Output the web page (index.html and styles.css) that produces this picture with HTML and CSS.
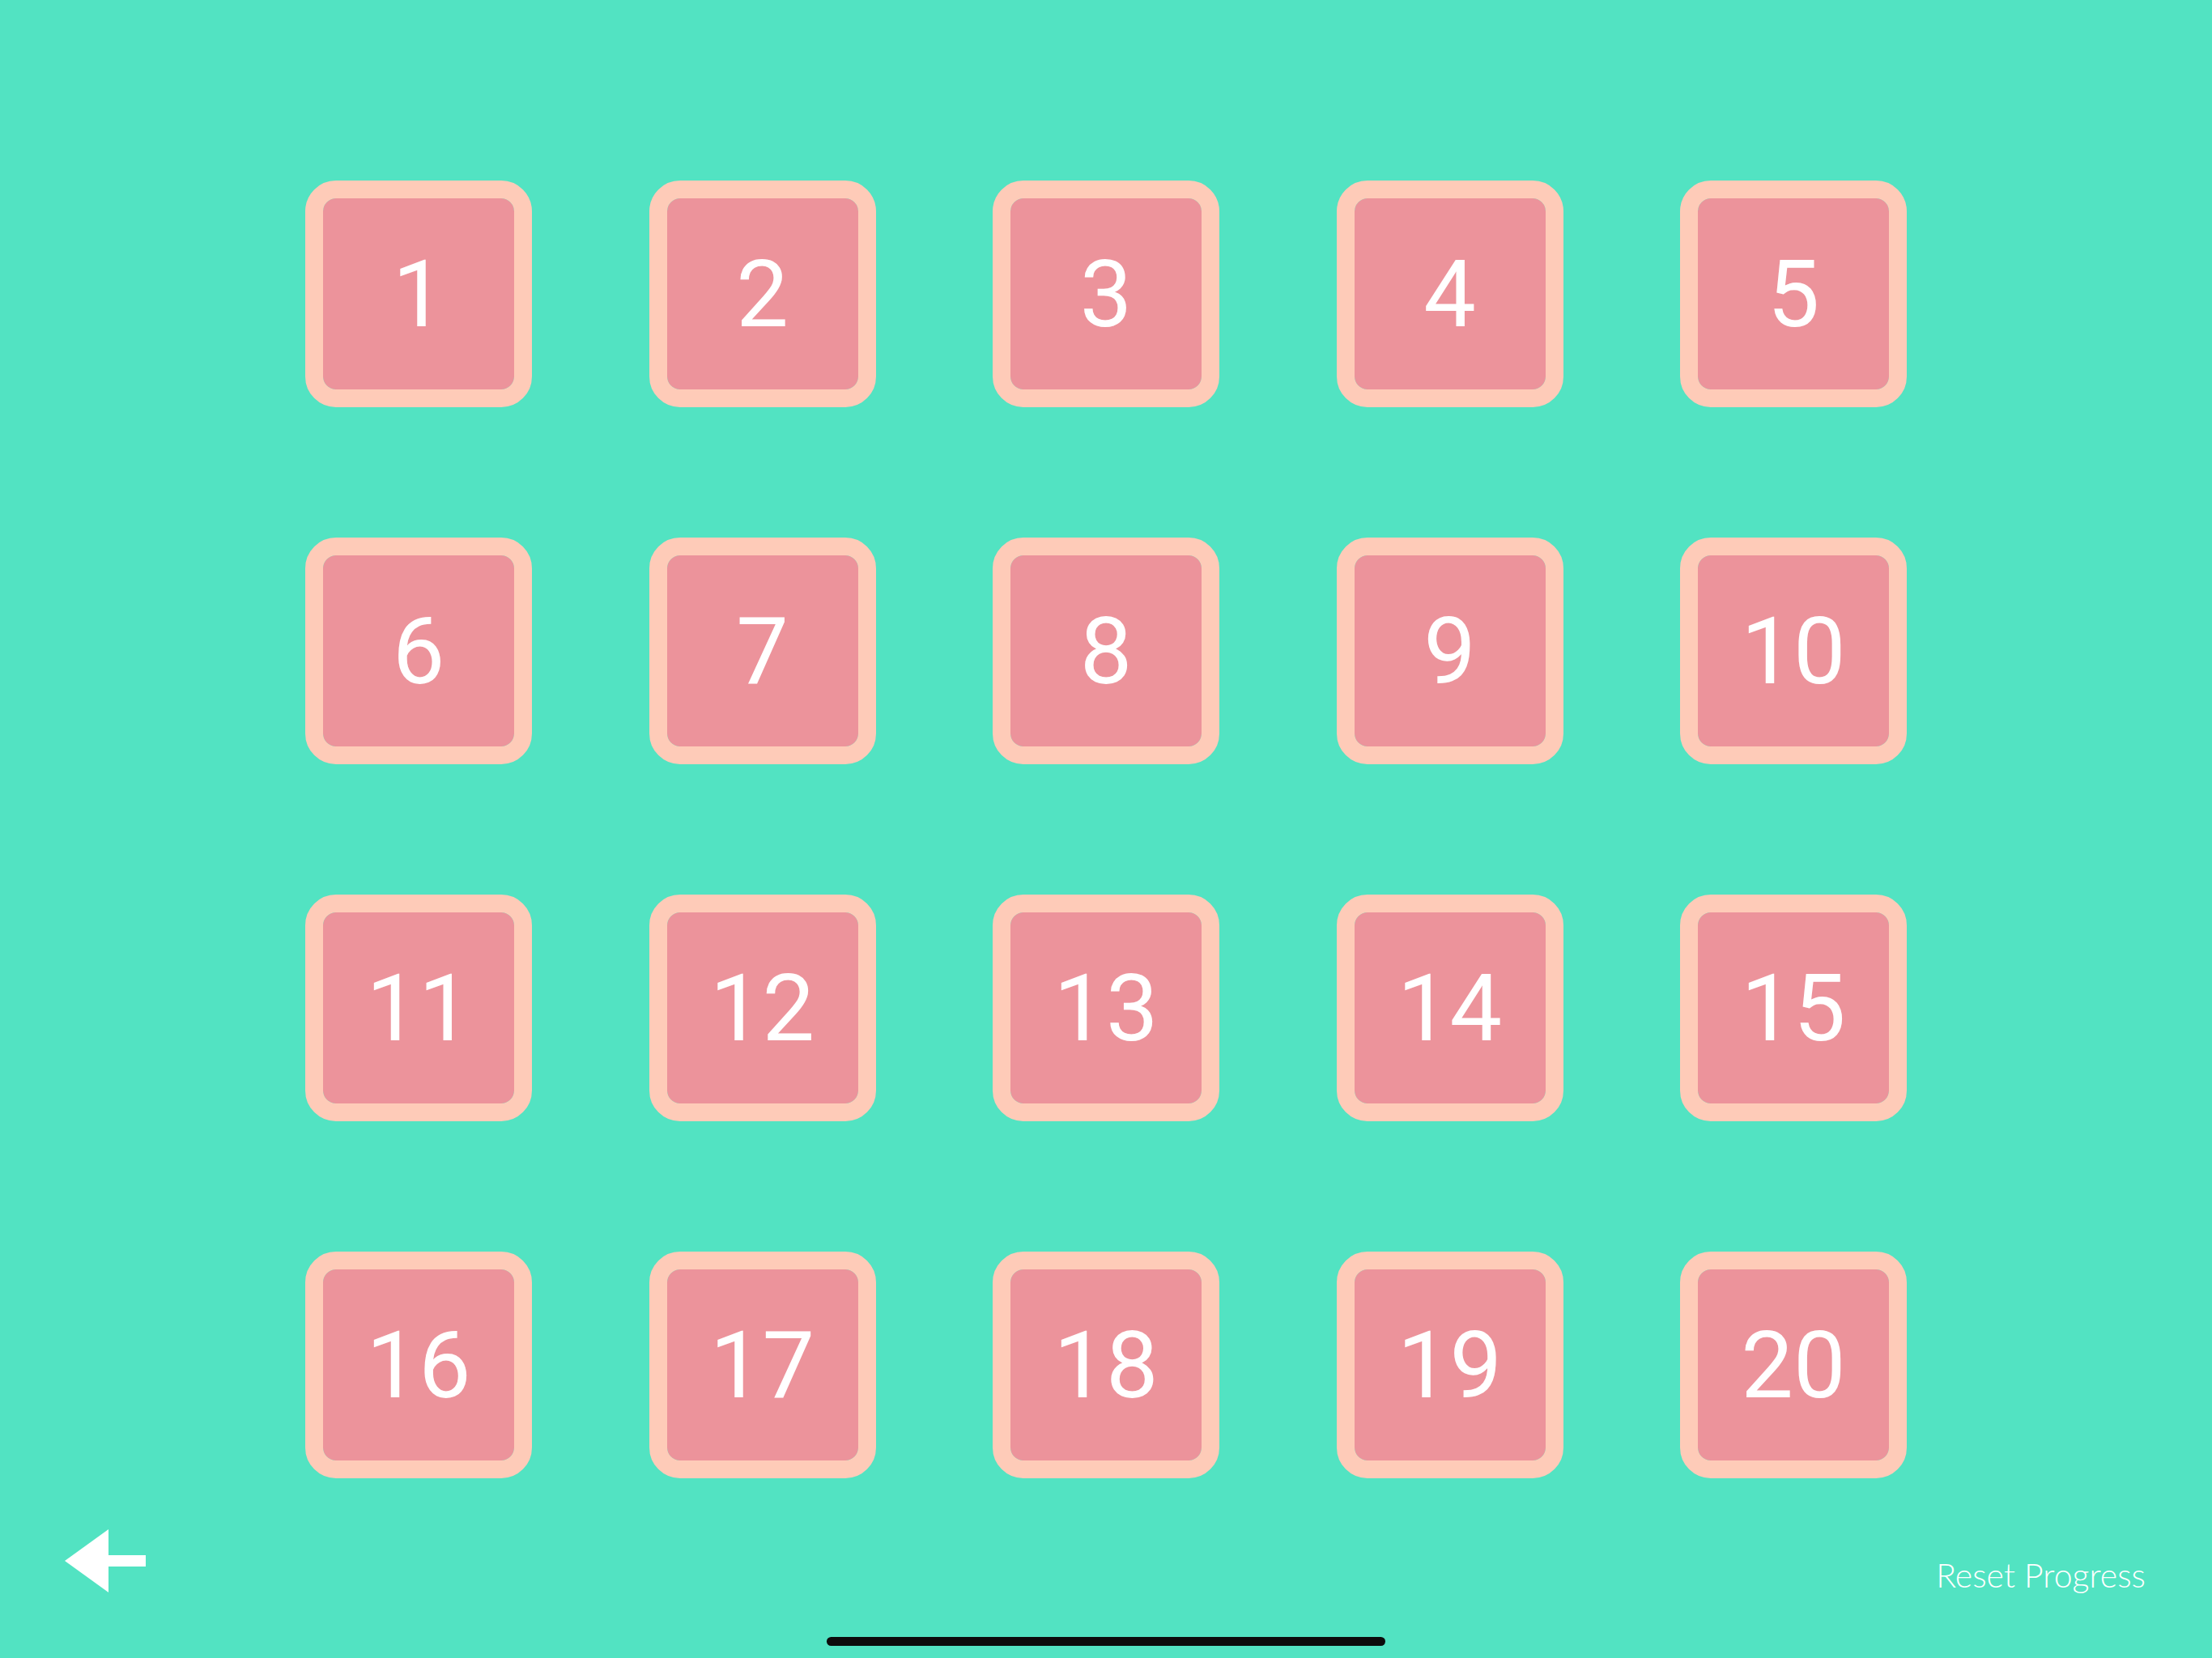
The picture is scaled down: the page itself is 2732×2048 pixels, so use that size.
FILE: index.html
```html
<!DOCTYPE html>
<html lang="en">
<head>
    <meta charset="UTF-8">
    <meta name="viewport" content="width=device-width, initial-scale=1.0">
    <title>Levels</title>
    <link rel="stylesheet" href="styles.css">
</head>
<body>

    <div class="screen">
        <div class="level-grid">
            <button class="level">1</button>
            <button class="level">2</button>
            <button class="level">3</button>
            <button class="level">4</button>
            <button class="level">5</button>
            <button class="level">6</button>
            <button class="level">7</button>
            <button class="level">8</button>
            <button class="level">9</button>
            <button class="level">10</button>
            <button class="level">11</button>
            <button class="level">12</button>
            <button class="level">13</button>
            <button class="level">14</button>
            <button class="level">15</button>
            <button class="level">16</button>
            <button class="level">17</button>
            <button class="level">18</button>
            <button class="level">19</button>
            <button class="level">20</button>
        </div>

        <div class="footer">
            <button class="back-button" aria-label="Back">
                <svg width="100" height="78" viewBox="0 0 100 78">
                    <polygon points="0,39 54,0 54,78" fill="#fff"/>
                    <rect x="53" y="32" width="47" height="14" fill="#fff"/>
                </svg>
            </button>
            <button class="reset-button">Reset Progress</button>
        </div>

        <div class="home-indicator"></div>
    </div>

</body>
</html>
```

FILE: styles.css
```css
/* Basic reset */
* {
    margin: 0;
    padding: 0;
    box-sizing: border-box;
}

body {
    background-color: #52e3c2;
    font-family: Roboto, "Liberation Sans", Arial, sans-serif;
}

.screen {
    position: relative;
    width: 2732px;
    height: 2048px;
    display: flex;
    flex-direction: column;
}

.level-grid {
    display: grid;
    grid-template-columns: repeat(5, 280px);
    column-gap: 144.5px;
    row-gap: 161px;
    justify-content: center;
    margin-top: 223px;
}

.level {
    width: 280px;
    height: 280px;
    border: 22px solid #fecbb8;
    border-radius: 38px;
    background-color: #ec939b;
    background-clip: padding-box;
    color: #fff;
    font-family: Roboto, "Liberation Sans", Arial, sans-serif;
    font-size: 115px;
    line-height: 1;
    display: flex;
    align-items: center;
    justify-content: center;
    cursor: pointer;
}

.footer {
    display: flex;
    justify-content: space-between;
    align-items: flex-start;
    margin-top: 63px;
    padding: 0 82px 0 80px;
}

.back-button,
.reset-button {
    background: none;
    border: none;
    color: #fff;
    cursor: pointer;
}

.back-button svg {
    display: block;
}

.reset-button {
    margin-top: 32px;
    font-family: Lato, "Open Sans", sans-serif;
    font-weight: 300;
    font-size: 41px;
    line-height: 50px;
}

.home-indicator {
    position: absolute;
    left: 1021px;
    bottom: 15px;
    width: 690px;
    height: 11px;
    border-radius: 6px;
    background-color: #0c0c0c;
}
```
